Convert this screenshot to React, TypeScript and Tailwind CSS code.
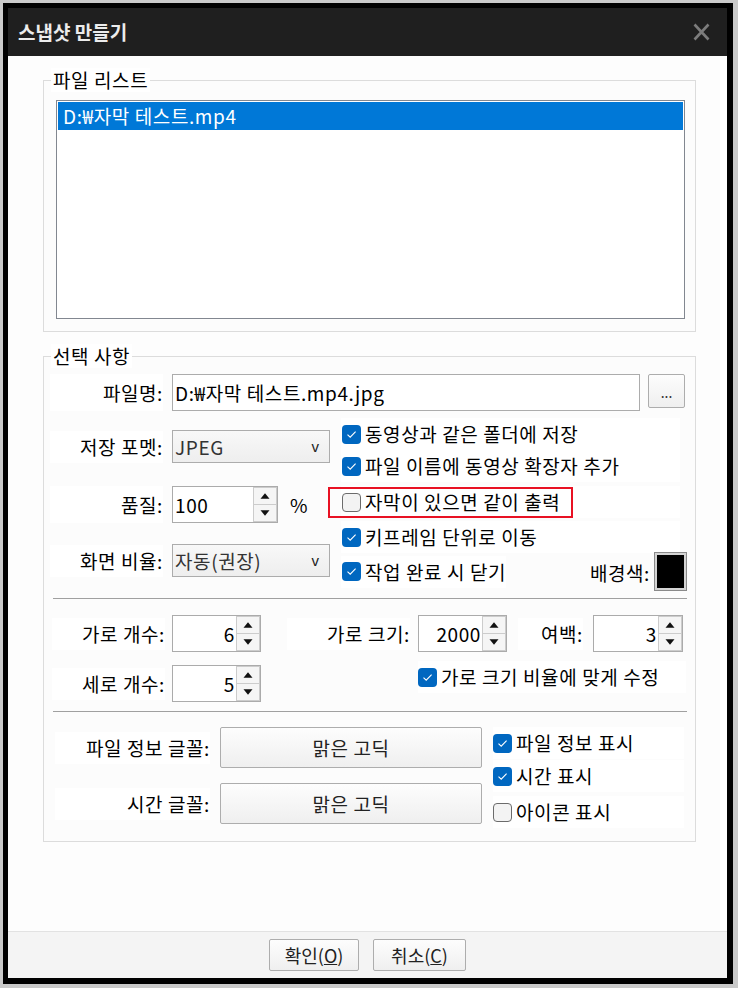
import React from "react";

const font = { fontFamily: '"Noto Sans CJK KR", "Noto Sans", sans-serif' };
const T = "text-[19px] leading-[24px] tracking-[0.6px]";

function Check({ checked }: { checked: boolean }) {
  if (checked) {
    return (
      <span className="w-[19px] h-[19px] shrink-0 rounded-[4px] bg-[#0067c0] flex items-center justify-center">
        <svg width="11" height="9" viewBox="0 0 11 9">
          <path d="M1.5 4.6 L4.2 7.2 L9.6 1.6" stroke="white" strokeWidth="1.1" fill="none" />
        </svg>
      </span>
    );
  }
  return <span className="w-[19px] h-[19px] shrink-0 rounded-[4px] border border-[#6b6b6b] bg-[#f3f3f3]" />;
}

function CheckRow({ checked, label, className = "" }: { checked: boolean; label: string; className?: string }) {
  return (
    <div className={"flex items-center gap-[4px] bg-white h-[32px] " + className}>
      <Check checked={checked} />
      <span className={T + " text-black whitespace-nowrap"}>{label}</span>
    </div>
  );
}

function Label({ text, className = "" }: { text: string; className?: string }) {
  return (
    <div className={"bg-white flex items-center justify-end text-black whitespace-nowrap " + T + " " + className}>
      {text}
    </div>
  );
}

function Arrow({ up }: { up: boolean }) {
  return (
    <svg width="10" height="6" viewBox="0 0 10 6">
      {up ? <path d="M0.5 5.8 L5 0.3 L9.5 5.8 Z" fill="#111" /> : <path d="M0.5 0.2 L5 5.7 L9.5 0.2 Z" fill="#111" />}
    </svg>
  );
}

function Spin({ value, width, h = 37, align = "right" }: { value: string; width: number; h?: number; align?: "left" | "right" }) {
  return (
    <div className="flex border border-[#ababab] bg-white" style={{ width, height: h }}>
      <div className={"flex-1 flex items-center text-black " + T + " " + (align === "right" ? "justify-end pr-[1px]" : "justify-start pl-[2px]")}>
        {value}
      </div>
      <div className="w-[24px] flex flex-col bg-[#f7f7f7]">
        <div className="flex-1 flex items-center justify-center border border-[#cccccc] bg-[#f5f5f5]">
          <Arrow up />
        </div>
        <div className="flex-1 flex items-center justify-center border border-[#cccccc] border-t-0 bg-[#f5f5f5]">
          <Arrow up={false} />
        </div>
      </div>
    </div>
  );
}

function Combo({ value }: { value: string }) {
  return (
    <div className="w-[158px] h-[33px] border border-[#acacac] bg-gradient-to-b from-[#f8f8f8] to-[#eeeeee] flex items-center justify-between pl-[2px] pr-[10px]">
      <span className={T + " text-[#333]"}>{value}</span>
      <span className="text-[15px] leading-[20px] text-[#222]" style={{ fontFamily: '"Liberation Sans", sans-serif' }}>v</span>
    </div>
  );
}

function Btn({ children, className = "" }: { children: React.ReactNode; className?: string }) {
  return (
    <div className={"border border-[#adadad] rounded-[2px] bg-gradient-to-b from-[#fdfdfd] to-[#efefef] flex items-center justify-center text-[#222] " + className}>
      {children}
    </div>
  );
}

export default function App() {
  return (
    <div className="w-[738px] h-[988px] bg-[#c9c9c9] pt-[3px] pl-[3px] pr-[5px] pb-[4px]" style={font}>
      <div className="w-full h-full bg-black pt-[5px] pl-[5px] pr-[6px] pb-[6px]">
        <div className="w-full h-full flex flex-col bg-[#fdfdfd]">
          {/* Title bar */}
          <div className="h-[48px] bg-[#1f1f1f] flex items-center justify-between pl-[10px] pr-[17px] shrink-0">
            <span className="text-[19px] font-bold text-[#ececec] leading-[24px]">스냅샷 만들기</span>
            <svg width="17" height="18" viewBox="0 0 17 18">
              <path d="M1.5 1.5 L15.5 16.5 M15.5 1.5 L1.5 16.5" stroke="#7c7c7c" strokeWidth="2.6" />
            </svg>
          </div>

          {/* Body */}
          <div className="flex-1 flex flex-col pl-[35px] pt-[12px]">
            {/* 파일 리스트 */}
            <fieldset className="w-[653px] h-[264px] border border-[#dcdcdc] bg-[#fcfcfc] pl-[12px] pr-[10px]">
              <legend className={"-ml-[5px] px-[2px] bg-white text-black " + T}>파일 리스트</legend>
              <div className="mt-[8px] w-[629px] h-[219px] border border-[#828790] bg-white p-px">
                <div className={"h-[28px] bg-[#0078d7] text-white flex items-center pl-[5px] " + T}>
                  D:₩자막 테스트.mp4
                </div>
              </div>
            </fieldset>

            {/* 선택 사항 */}
            <fieldset className="mt-[12px] w-[653px] h-[498px] border border-[#dcdcdc] bg-[#fcfcfc]">
              <legend className={"ml-[7px] px-[2px] bg-white text-black " + T}>선택 사항</legend>

              {/* 파일명 */}
              <div className="mt-[6px] flex items-start">
                <Label text="파일명:" className="ml-[6px] w-[113px] h-[37px]" />
                <div className={"ml-[9px] w-[468px] h-[37px] border border-[#acacac] bg-white flex items-center pl-[2px] text-black " + T}>
                  D:₩자막 테스트.mp4.jpg
                </div>
                <Btn className="ml-[8px] w-[37px] h-[34px]">
                  <span className="text-[14px] leading-[16px] text-[#333] mt-[2px]">...</span>
                </Btn>
              </div>

              {/* middle area */}
              <div className="mt-[7px] flex">
                <div className="flex flex-col w-[291px]">
                  <div className="mt-[12px] flex items-center">
                    <Label text="저장 포멧:" className="ml-[6px] w-[113px] h-[32px]" />
                    <div className="ml-[9px]">
                      <Combo value="JPEG" />
                    </div>
                  </div>
                  <div className="mt-[23px] flex items-center">
                    <Label text="품질:" className="ml-[6px] w-[113px] h-[37px]" />
                    <div className="ml-[9px]">
                      <Spin value="100" width={106} align="left" />
                    </div>
                    <span className={"ml-[12px] text-black " + T}>%</span>
                  </div>
                  <div className="mt-[21px] flex items-center">
                    <Label text="화면 비율:" className="ml-[6px] w-[113px] h-[32px]" />
                    <div className="ml-[9px]">
                      <Combo value="자동(권장)" />
                    </div>
                  </div>
                </div>
                <div className="ml-[6px] w-[345px] flex flex-col">
                  <CheckRow checked label="동영상과 같은 폴더에 저장" className="pl-px w-[339px]" />
                  <CheckRow checked label="파일 이름에 동영상 확장자 추가" className="pl-px w-[339px]" />
                  <div className="relative mt-[4px]">
                    <CheckRow checked={false} label="자막이 있으면 같이 출력" className="pl-px w-[339px]" />
                    <div className="absolute left-[-13px] top-[1px] w-[245px] h-[31px] border-2 border-[#e81123]" />
                  </div>
                  <CheckRow checked label="키프레임 단위로 이동" className="pl-px mt-[3px] w-[339px]" />
                  <div className="flex items-center justify-between">
                    <CheckRow checked label="작업 완료 시 닫기" className="pl-px" />
                    <div className="flex items-center">
                      <span className={"text-black mt-[2px] " + T}>배경색:</span>
                      <div className="ml-[5px] w-[31px] h-[37px] border-2 border-[#d4d4d4] bg-black outline outline-1 outline-[#8a8a8a]" />
                    </div>
                  </div>
                </div>
              </div>

              {/* separator */}
              <div className="mt-[8px] ml-[9px] w-[634px] h-px bg-[#a0a0a0]" />

              {/* 가로/세로 */}
              <div className="mt-[16px] flex items-center">
                <Label text="가로 개수:" className="ml-[8px] w-[113px] h-[32px]" />
                <div className="ml-[7px]">
                  <Spin value="6" width={89} />
                </div>
                <Label text="가로 크기:" className="ml-[26px] w-[123px] h-[32px]" />
                <div className="ml-[8px]">
                  <Spin value="2000" width={89} />
                </div>
                <Label text="여백:" className="ml-[11px] w-[65px] h-[32px]" />
                <div className="ml-[10px]">
                  <Spin value="3" width={90} />
                </div>
              </div>
              <div className="mt-[13px] flex items-center">
                <Label text="세로 개수:" className="ml-[8px] w-[113px] h-[32px]" />
                <div className="ml-[7px]">
                  <Spin value="5" width={89} />
                </div>
                <CheckRow checked label="가로 크기 비율에 맞게 수정" className="ml-[157px] w-[268px] -mt-[13px]" />
              </div>

              {/* separator */}
              <div className="mt-[9px] ml-[9px] w-[634px] h-px bg-[#a0a0a0]" />

              {/* fonts */}
              <div className="mt-[4px] flex">
                <div className="flex flex-col">
                  <div className="mt-[11px] flex items-center">
                    <Label text="파일 정보 글꼴:" className="ml-[11px] w-[155px] h-[32px]" />
                    <Btn className={"ml-[10px] w-[262px] h-[41px] " + T}>맑은 고딕</Btn>
                  </div>
                  <div className="mt-[15px] flex items-center">
                    <Label text="시간 글꼴:" className="ml-[11px] w-[155px] h-[32px]" />
                    <Btn className={"ml-[10px] w-[262px] h-[41px] " + T}>맑은 고딕</Btn>
                  </div>
                </div>
                <div className="ml-[11px] flex flex-col w-[191px]">
                  <CheckRow checked label="파일 정보 표시" className="mt-[11px]" />
                  <CheckRow checked label="시간 표시" className="mt-[1px]" />
                  <CheckRow checked={false} label="아이콘 표시" className="mt-[4px]" />
                </div>
              </div>
            </fieldset>
          </div>

          {/* Footer */}
          <div className="h-[47px] shrink-0 border-t border-[#e2e2e2] bg-[#f4f4f4] flex items-start justify-center gap-[14px] pt-[7px]">
            <Btn className="w-[90px] h-[32px] text-[18px] leading-[24px]">
              확인(<span className="underline">O</span>)
            </Btn>
            <Btn className="w-[93px] h-[32px] text-[18px] leading-[24px]">
              취소(<span className="underline">C</span>)
            </Btn>
          </div>
        </div>
      </div>
    </div>
  );
}
